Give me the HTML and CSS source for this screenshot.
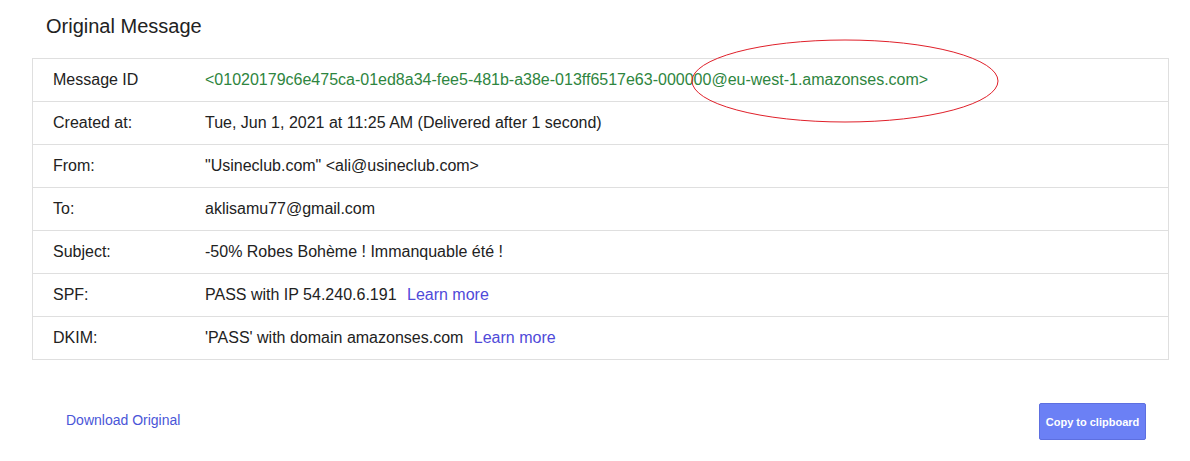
FILE: index.html
```html
<!DOCTYPE html>
<html>
<head>
<meta charset="utf-8">
<link rel="stylesheet" href="styles.css">
</head>
<body>
<div class="page">
  <h1 class="title">Original Message</h1>
  <div class="table">
    <div class="row"><div class="label">Message ID</div><div class="value green">&lt;01020179c6e475ca-01ed8a34-fee5-481b-a38e-013ff6517e63-000000@eu-west-1.amazonses.com&gt;</div></div>
    <div class="row"><div class="label">Created at:</div><div class="value">Tue, Jun 1, 2021 at 11:25 AM (Delivered after 1 second)</div></div>
    <div class="row"><div class="label">From:</div><div class="value">"Usineclub.com" &lt;ali@usineclub.com&gt;</div></div>
    <div class="row"><div class="label">To:</div><div class="value">aklisamu77@gmail.com</div></div>
    <div class="row"><div class="label">Subject:</div><div class="value">-50% Robes Bohème ! Immanquable été !</div></div>
    <div class="row"><div class="label">SPF:</div><div class="value">PASS with IP 54.240.6.191 <a class="link" href="#">Learn more</a></div></div>
    <div class="row"><div class="label">DKIM:</div><div class="value">'PASS' with domain amazonses.com <a class="link" href="#">Learn more</a></div></div>
  </div>
  <div class="footer">
    <a class="download" href="#">Download Original</a>
    <button class="copy">Copy to clipboard</button>
  </div>
  <svg class="ellipse" width="320" height="90" viewBox="0 0 320 90"><ellipse cx="155" cy="42" rx="153" ry="41" fill="none" stroke="#e0202a" stroke-width="1"/></svg>
</div>
</body>
</html>
```
FILE: styles.css
```css
html, body { margin: 0; padding: 0; background: #fff; }
body { font-family: "Liberation Sans", Arial, sans-serif; color: #222; }
.page { position: relative; width: 1190px; height: 461px; padding: 13px 21px 0 32px; box-sizing: border-box; }
.title { margin: 0 0 19px 14px; font-size: 20px; font-weight: normal; line-height: 26px; color: #222; }
.table { border: 1px solid #dfdfdf; border-bottom: none; width: 1137px; box-sizing: border-box; }
.row { display: flex; align-items: center; height: 43px; border-bottom: 1px solid #dfdfdf; box-sizing: border-box; font-size: 16px; }
.label { width: 152px; padding-left: 20px; flex: none; }
.value { flex: 1; white-space: nowrap; }
.green { color: #2e8540; }
.link { color: #4f4ad9; text-decoration: none; margin-left: 6px; }
.footer { display: flex; justify-content: space-between; align-items: center; margin-top: 43px; padding-left: 34px; padding-right: 23px; }
.download { color: #4a56d8; text-decoration: none; font-size: 14px; margin-bottom: 3px; }
.copy { width: 107px; height: 37px; background: #6b80f5; border: 1px solid #5d6fe0; border-radius: 2px; color: #fff; font-family: "Liberation Sans", Arial, sans-serif; font-weight: bold; font-size: 11px; padding: 0; }
.ellipse { position: absolute; left: 690px; top: 39px; }
```
